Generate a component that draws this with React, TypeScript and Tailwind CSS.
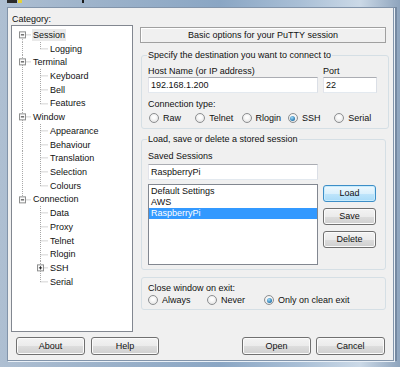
import React from "react";

type Node = { t: string; l: 0 | 1; exp?: "minus" | "plus"; last?: boolean };

const tree: Node[] = [
  { t: "Session", l: 0, exp: "minus" },
  { t: "Logging", l: 1, last: true },
  { t: "Terminal", l: 0, exp: "minus" },
  { t: "Keyboard", l: 1 },
  { t: "Bell", l: 1 },
  { t: "Features", l: 1, last: true },
  { t: "Window", l: 0, exp: "minus" },
  { t: "Appearance", l: 1 },
  { t: "Behaviour", l: 1 },
  { t: "Translation", l: 1 },
  { t: "Selection", l: 1 },
  { t: "Colours", l: 1, last: true },
  { t: "Connection", l: 0, exp: "minus" },
  { t: "Data", l: 1 },
  { t: "Proxy", l: 1 },
  { t: "Telnet", l: 1 },
  { t: "Rlogin", l: 1 },
  { t: "SSH", l: 1, exp: "plus" },
  { t: "Serial", l: 1, last: true },
];

const H = 13.72;
const C = H / 2;
const LINE = "#a8a8a8";

function Expander({ x, kind }: { x: number; kind: "minus" | "plus" }) {
  return (
    <g>
      <rect x={x - 3} y={C - 3} width={6} height={6} fill="#fbfbfb" stroke="#8e8f8f" strokeWidth={1} />
      <line x1={x - 1.6} y1={C} x2={x + 1.6} y2={C} stroke="#2a2a2a" strokeWidth={1} />
      {kind === "plus" && <line x1={x} y1={C - 1.6} x2={x} y2={C + 1.6} stroke="#2a2a2a" strokeWidth={1} />}
    </g>
  );
}

function TreeRow({ n, i }: { n: Node; i: number }) {
  const w = n.l === 0 ? 20 : 37;
  const x0 = 10.5;
  const x1 = 28.5;
  let v0: [number, number] | null = null;
  if (i === 0) v0 = [C, H];
  else if (i < 12) v0 = [0, H];
  else if (i === 12) v0 = [0, C];
  const dash = { stroke: LINE, strokeWidth: 1, strokeDasharray: "1 1" };
  return (
    <div className="flex h-[13.72px] items-center">
      <svg width={w} height={H} className="shrink-0">
        {v0 && <line x1={x0} y1={v0[0]} x2={x0} y2={v0[1]} {...dash} />}
        {n.l === 0 && <line x1={x0} y1={C} x2={19} y2={C} {...dash} />}
        {n.l === 1 && (
          <>
            <line x1={x1} y1={0} x2={x1} y2={n.last ? C : H} {...dash} />
            <line x1={x1} y1={C} x2={36} y2={C} {...dash} />
          </>
        )}
        {n.l === 0 && n.exp && <Expander x={x0} kind={n.exp} />}
        {n.l === 1 && n.exp && <Expander x={x1} kind={n.exp} />}
      </svg>
      <span className={"px-[1px] leading-[12px] text-[#111] " + (i === 0 ? "bg-[#e9e9e9]" : "")}>{n.t}</span>
    </div>
  );
}

function Radio({ checked }: { checked?: boolean }) {
  return (
    <span className="inline-flex h-[10px] w-[10px] shrink-0 items-center justify-center rounded-full border border-[#8c8e90] bg-[radial-gradient(circle_at_50%_40%,#fdfdfd_20%,#dcdcdc_100%)]">
      {checked && (
        <span className="h-[5px] w-[5px] rounded-full bg-[radial-gradient(circle_at_40%_35%,#9fdcfb,#1769a3_80%)]" />
      )}
    </span>
  );
}

function RadioItem({ label, checked, w }: { label: string; checked?: boolean; w: string }) {
  return (
    <div className={"flex items-center gap-[4px] " + w}>
      <Radio checked={checked} />
      <span className="leading-[12px]">{label}</span>
    </div>
  );
}

function Button({ label, w, def }: { label: string; w: string; def?: boolean }) {
  return (
    <div
      className={
        "flex items-center justify-center rounded-[3px] border leading-none " +
        w +
        (def
          ? " border-[#3d8ec7] bg-[linear-gradient(180deg,#eef8fe_0%,#daf0fc_50%,#bfe5fb_51%,#a9dbf8_100%)] shadow-[inset_0_0_0_1px_#c8ecfd]"
          : " border-[#707070] bg-[linear-gradient(180deg,#f3f3f3_0%,#ebebeb_50%,#dddddd_51%,#cfcfcf_100%)] shadow-[inset_0_0_0_1px_#fbfbfb]")
      }
    >
      {label}
    </div>
  );
}

function TextBox({ value, w }: { value: string; w: string }) {
  return (
    <div
      className={
        "flex h-[16px] items-center border border-[#abadb3] border-l-[#e2e3ea] border-r-[#dbdfe6] border-b-[#e3e9ef] bg-white pl-[2px] leading-none " +
        w
      }
    >
      {value}
    </div>
  );
}

export default function App() {
  return (
    <div className="flex h-[367px] w-[400px] flex-col overflow-hidden bg-[linear-gradient(90deg,#aebfd2_0%,#9cb2ca_25%,#8aa6c4_55%,#a9bfd6_75%,#cbd9e7_90%,#8ea4bd_100%)] font-['Liberation_Sans',Arial,sans-serif] text-[9px] text-[#111]">
      <div className="flex h-[7px] shrink-0 items-start pl-[4px]">
        <svg width="90" height="7" className="shrink-0">
          <rect x="3" y="0" width="10" height="3" fill="#2b2b2b" />
          <rect x="14" y="0" width="4" height="3" fill="#e5d23a" />
          <rect x="78" y="0" width="2" height="3" fill="#1a1a1a" />
        </svg>
      </div>
      <div className="ml-[7px] mr-[6px] flex h-[354px] flex-col border border-[#8294aa] bg-[#f0f0f0] shadow-[1px_1px_0_#e9f0f7,3px_0_0_#7589a1]">
        <div className="flex h-[324px]">
          <div className="flex w-[125px] shrink-0 flex-col pl-[3px]">
            <div className="h-[17px] pl-[1px] pt-[5px] leading-[12px]">Category:</div>
            <div className="h-[307px] w-[122px] border border-[#828790] bg-white pt-[2px]">
              {tree.map((n, i) => (
                <TreeRow key={n.t} n={n} i={i} />
              ))}
            </div>
          </div>
          <div className="ml-[7px] flex w-[246px] flex-col pt-[19px]">
            <div className="flex h-[16px] items-center justify-center border border-[#a0a0a0] bg-[#f0f0f0] leading-none shadow-[inset_1px_1px_0_#ffffff]">
              Basic options for your PuTTY session
            </div>

            <fieldset className="ml-[1px] mt-[6px] rounded-[3px] border border-[#d5dfe5] pb-[4px] pl-[6px] pr-[8px]">
              <legend className="-ml-[1px] px-[1px] leading-[12px]">Specify the destination you want to connect to</legend>
              <div className="mt-[4px] flex">
                <div className="flex w-[170px] flex-col">
                  <span className="leading-[12px]">Host Name (or IP address)</span>
                  <TextBox value="192.168.1.200" w="w-[170px]" />
                </div>
                <div className="ml-[5px] flex w-[54px] flex-col">
                  <span className="leading-[12px]">Port</span>
                  <TextBox value="22" w="w-[54px]" />
                </div>
              </div>
              <div className="mt-[5px] leading-[12px]">Connection type:</div>
              <div className="mt-[2px] flex h-[12px] items-center pl-[1px]">
                <RadioItem label="Raw" w="w-[46.3px]" />
                <RadioItem label="Telnet" w="w-[46.3px]" />
                <RadioItem label="Rlogin" w="w-[46.3px]" />
                <RadioItem label="SSH" checked w="w-[46.3px]" />
                <RadioItem label="Serial" w="w-[46.3px]" />
              </div>
            </fieldset>

            <fieldset className="ml-[1px] mt-[4px] rounded-[3px] border border-[#d5dfe5] pb-[4px] pl-[6px] pr-[8px]">
              <legend className="-ml-[1px] px-[1px] leading-[12px]">Load, save or delete a stored session</legend>
              <div className="mt-[5px] leading-[12px]">Saved Sessions</div>
              <div className="mt-[2px]">
                <TextBox value="RaspberryPi" w="w-[170px]" />
              </div>
              <div className="mt-[4px] flex">
                <div className="h-[81px] w-[170px] border border-[#828790] bg-white pt-[1px]">
                  <div className="h-[11px] pl-[2px] leading-[11px]">Default Settings</div>
                  <div className="h-[11px] pl-[2px] leading-[11px]">AWS</div>
                  <div className="h-[11px] bg-[#3399ff] pl-[2px] leading-[11px] text-white">RaspberryPi</div>
                </div>
                <div className="ml-[5px] mt-[1px] flex flex-col gap-[6px]">
                  <Button label="Load" w="h-[17px] w-[53px]" def />
                  <Button label="Save" w="h-[17px] w-[53px]" />
                  <Button label="Delete" w="h-[17px] w-[53px]" />
                </div>
              </div>
            </fieldset>

            <div className="ml-[1px] mt-[7px] rounded-[3px] border border-[#d5dfe5] pb-[3px] pl-[6px] pt-[4px]">
              <div className="leading-[12px]">Close window on exit:</div>
              <div className="flex h-[12px] items-center">
                <RadioItem label="Always" w="w-[59px]" />
                <RadioItem label="Never" w="w-[57px]" />
                <RadioItem label="Only on clean exit" checked w="w-[100px]" />
              </div>
            </div>
          </div>
        </div>
        <div className="mt-[5px] flex h-[18px] justify-between pl-[8px] pr-[8px]">
          <div className="flex gap-[6px]">
            <Button label="About" w="h-[18px] w-[69px]" />
            <Button label="Help" w="h-[18px] w-[68px]" />
          </div>
          <div className="flex gap-[5px]">
            <Button label="Open" w="h-[18px] w-[69px]" />
            <Button label="Cancel" w="h-[18px] w-[69px]" />
          </div>
        </div>
      </div>
    </div>
  );
}
